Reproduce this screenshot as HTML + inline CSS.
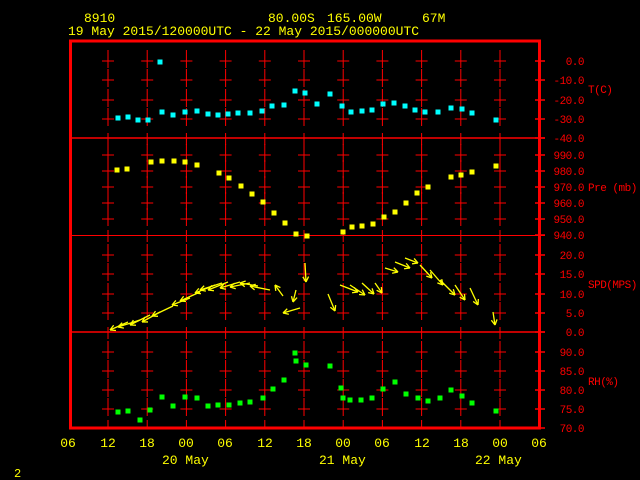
<!DOCTYPE html>
<html><head><meta charset="utf-8"><style>
html,body{margin:0;padding:0;background:#000;width:640px;height:480px;overflow:hidden}
svg{position:absolute;left:0;top:0}
text{font-family:"Liberation Mono",monospace}
</style></head><body>
<svg id="s" width="640" height="480" xmlns="http://www.w3.org/2000/svg">
<g fill="#ffff00" font-size="13">
<text x="84" y="22">8910</text>
<text x="268" y="22">80.00S</text>
<text x="327" y="22">165.00W</text>
<text x="422" y="22">67M</text>
<text x="68" y="35">19 May 2015/120000UTC - 22 May 2015/000000UTC</text>
<text x="68" y="447" text-anchor="middle">06</text>
<text x="108" y="447" text-anchor="middle">12</text>
<text x="147" y="447" text-anchor="middle">18</text>
<text x="186" y="447" text-anchor="middle">00</text>
<text x="225" y="447" text-anchor="middle">06</text>
<text x="265" y="447" text-anchor="middle">12</text>
<text x="304" y="447" text-anchor="middle">18</text>
<text x="343" y="447" text-anchor="middle">00</text>
<text x="382" y="447" text-anchor="middle">06</text>
<text x="422" y="447" text-anchor="middle">12</text>
<text x="461" y="447" text-anchor="middle">18</text>
<text x="500" y="447" text-anchor="middle">00</text>
<text x="539" y="447" text-anchor="middle">06</text>
<text x="162" y="464">20 May</text>
<text x="319" y="464">21 May</text>
<text x="475" y="464">22 May</text>
<text x="14" y="477" font-size="12">2</text>
</g>
<g fill="#ff0000" font-size="11" text-anchor="end" letter-spacing="-0.5">
<text x="584" y="65">0.0</text><text x="584" y="84">-10.0</text><text x="584" y="104">-20.0</text><text x="584" y="123">-30.0</text><text x="584" y="142">-40.0</text>
<text x="584" y="159">990.0</text><text x="584" y="175">980.0</text><text x="584" y="191">970.0</text><text x="584" y="207">960.0</text><text x="584" y="223">950.0</text><text x="584" y="239">940.0</text>
<text x="584" y="259">20.0</text><text x="584" y="278">15.0</text><text x="584" y="298">10.0</text><text x="584" y="317">5.0</text><text x="584" y="336">0.0</text>
<text x="584" y="356">90.0</text><text x="584" y="375">85.0</text><text x="584" y="394">80.0</text><text x="584" y="413">75.0</text><text x="584" y="432">70.0</text>
</g>
<g fill="#ff0000" font-size="11" letter-spacing="-0.5">
<text x="588" y="93">T(C)</text>
<text x="588" y="191">Pre (mb)</text>
<text x="588" y="288">SPD(MPS)</text>
<text x="588" y="385">RH(%)</text>
</g>
<g id="g"></g>
</svg>
<script>
var g=document.getElementById('g'),h='';
function L(a,b,c,d,col,w){h+='<line x1="'+a+'" y1="'+b+'" x2="'+c+'" y2="'+d+'" stroke="'+col+'" stroke-width="'+(w||1)+'"/>';}
function R(x,y,col){h+='<rect x="'+(x-2.5)+'" y="'+(y-2.5)+'" width="5" height="5" fill="'+col+'"/>';}
var red='#ff0000';
h+='<rect x="70.5" y="41" width="469" height="387" fill="none" stroke="'+red+'" stroke-width="3"/>';
L(70,138,545,138,red,1.5);L(70,235.5,545,235.5,red,1);L(70,332,545,332,red,1.5);
var rows=[61,80,100,119,155,171,187,203,219,255,274,294,313,352,371,390,409];
var all=[61,80,100,119,138,155,171,187,203,219,235,255,274,294,313,332,352,371,390,409,428];
all.forEach(function(y){L(535,y,545,y,red,1.5);});
for(var i=0;i<11;i++){var x=108+i*39.2;
 rows.forEach(function(y){L(x,y-11,x,y+7,red,1);L(x-6,y,x+6,y,red,1);});
 [138,235,332].forEach(function(y){L(x,y-5,x,y+7,red,1);});
 L(x,420,x,428,red,1);
}
var cy=[[118,118],[128,117],[138,120],[148,120],[160,62],[162,112],[173,115],[185,112],[197,111],[208,114],[218,115],[228,114],[238,113],[250,113],[262,111],[272,106],[284,105],[295,91],[305,93],[317,104],[330,94],[342,106],[351,112],[362,111],[372,110],[383,104],[394,103],[405,106],[415,110],[425,112],[438,112],[451,108],[462,109],[472,113],[496,120]];
cy.forEach(function(p){R(p[0],p[1],'#00ffff');});
var ye=[[117,170],[127,169],[151,162],[162,161],[174,161],[185,162],[197,165],[219,173],[229,178],[241,186],[252,194],[263,202],[274,213],[285,223],[296,234],[307,236],[343,232],[352,227],[362,226],[373,224],[384,217],[395,212],[406,203],[417,193],[428,187],[451,177],[461,175],[472,172],[496,166]];
ye.forEach(function(p){R(p[0],p[1],'#ffff00');});
var gr=[[118,412],[128,411],[140,420],[150,410],[162,397],[173,406],[185,397],[197,398],[208,406],[218,405],[229,405],[240,403],[250,402],[263,398],[273,389],[284,380],[295,353],[296,361],[306,365],[330,366],[341,388],[343,398],[350,400],[361,400],[372,398],[383,389],[395,382],[406,394],[418,398],[428,401],[440,398],[451,390],[462,396],[472,403],[496,411]];
gr.forEach(function(p){R(p[0],p[1],'#00ff00');});
var ar=[[128,322,110,330],[140,320,118,327],[150,315,130,325],[160,312,142,322],[173,306,152,316],[190,298,172,305],[200,292,180,301],[215,285,195,293],[222,283,200,290],[228,282,208,290],[240,282,220,288],[250,283,230,287],[258,286,240,283],[270,290,250,286],[283,296,275,285],[296,290,293,302],[305,263,306,282],[300,308,283,313],[328,294,335,311],[340,285,358,292],[350,285,365,295],[362,283,374,294],[375,283,382,293],[385,268,398,272],[395,262,410,268],[405,258,418,263],[420,265,432,278],[430,270,443,285],[440,280,455,295],[455,285,465,300],[470,288,478,305],[493,312,495,325]];
ar.forEach(function(a){var yc='#ffff00';L(a[0],a[1],a[2],a[3],yc,1.3);
 var dx=a[0]-a[2],dy=a[1]-a[3],l=Math.hypot(dx,dy);dx/=l;dy/=l;var s=6;
 var c=Math.cos(.5),n=Math.sin(.5);
 L(a[2],a[3],a[2]+s*(dx*c-dy*n),a[3]+s*(dx*n+dy*c),yc,1.3);
 L(a[2],a[3],a[2]+s*(dx*c+dy*n),a[3]+s*(-dx*n+dy*c),yc,1.3);});
g.innerHTML=h;
</script>
</body></html>
